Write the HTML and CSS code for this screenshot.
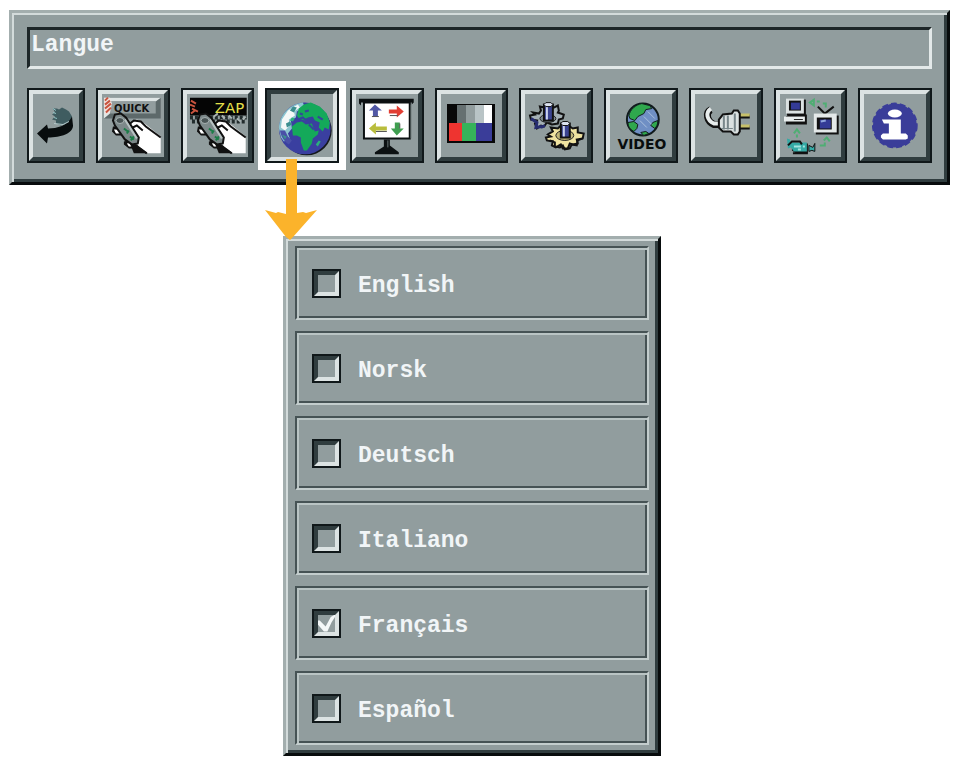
FILE: index.html
```
<!DOCTYPE html>
<html lang="fr">
<head>
  <meta charset="UTF-8">
  <meta name="viewport" content="width=device-width, initial-scale=1.0">
  <title>Langue</title>
  <link rel="stylesheet" href="styles.css">
</head>
<body>
  <!-- shared drawing: hand holding the remote -->
  <svg class="defs" width="0" height="0" aria-hidden="true">
    <symbol id="hand" viewBox="6 6 62 62">
      <path d="M17 38h7l4 9h-8l-4-4zM28 53l8-2 5 9h-8l-5-4z" fill="#111"/>
      <path d="M18 41h4l2 4h-4zM31 55l5-1 2 4h-5z" fill="#fff"/>
      <path d="M32 50l20 15h-14z" fill="#111"/>
      <path d="M34 42l2-8 5-3 8 4 16 13v17H52l-9-7-5-9z" fill="#fff"/>
      <path d="M33 36l5-4 7 1 5 5 15 11M35 40l6-3 6 5M51 65l-11-8" fill="none" stroke="#111" stroke-width="2"/>
      <path d="M17 32l2-6 6-1 5 4 13 20-1 6-6 1-7-5-10-14z" fill="#7d898a" stroke="#111" stroke-width="2"/>
      <path d="M29 31l12 19" stroke="#b9c3c3" stroke-width="2"/>
      <ellipse cx="24" cy="32" rx="4" ry="3" fill="#4a5556" stroke="#a9b3b3"/>
      <path d="M28 40l4 3M31 45l2-3M34 48l4 3M35 52l3-4" stroke="#1c7d48" stroke-width="2"/>
    </symbol>
  </svg>

  <header class="panel toolbar">
    <div class="title">Langue</div>
    <nav class="tools">
      <button class="tool" type="button" aria-label="Retour">
        <svg viewBox="6 6 46 62">
          <path d="M26 20h4l2 1 3-2 4 2 3 2 3 5-1 5-10 4-5-2v-3l-4-1 3-3-3-2 3-2z" fill="#3f5c60"/>
          <path d="M26 20l3 2M26 24l3 1M27 29l3 1" stroke="#8fc2c4" stroke-width="1"/>
          <path d="M10 45l10-9 1 4c9 0 20-3 24-12l1 9c0 8-12 12-25 12l-1 6z" fill="#080d0e"/>
          <path d="M27 35l9 1 6-3" stroke="#b3c9ca" stroke-width="1" fill="none"/>
        </svg>
      </button>
      <button class="tool" type="button" aria-label="Quick">
        <svg viewBox="6 6 62 62">
          <path d="M8 9h57v21H8z" fill="#5d696a"/>
          <path d="M8 9h57l-5 4H14v12l-6 5z" fill="#dfe5e5"/>
          <path d="M14 13h46v12H14z" fill="#929d9e"/>
          <path d="M8 9h6l2 6-2 9-5 2z" fill="#efe3df"/>
          <path d="M9 12l3-3M9 16l5-4M9 20l6-5M10 24l5-5" stroke="#c9543f" stroke-width="2"/>
          <text class="quick" x="18" y="23">QUICK</text>
          <use href="#hand" x="6" y="6" width="62" height="62"/>
        </svg>
      </button>
      <button class="tool" type="button" aria-label="Zap">
        <svg viewBox="6 6 62 62">
          <path d="M9 9h57v18H9z" fill="#050505"/>
          <path d="M9 29h57M11 33h55" stroke="#222c2d" stroke-width="4" stroke-dasharray="3 2"/>
          <path d="M10 12l5 3M9 16l5 2M11 20l6 3M10 25l4-3" stroke="#c9543f" stroke-width="2"/>
          <path d="M33 28l4-3M41 27l3 3M48 27l3 3M56 30l4 3M62 31l3-3" stroke="#a9b3b3" stroke-width="2"/>
          <text class="zap" x="34" y="24">ZAP</text>
          <use href="#hand" x="6" y="6" width="62" height="62"/>
        </svg>
      </button>
      <div class="current">
        <button class="tool pressed" type="button" aria-label="Langue" aria-pressed="true">
          <svg viewBox="6 6 62 62">
            <circle cx="42" cy="42" r="25" fill="#15181c"/>
            <circle cx="40" cy="40" r="26" fill="#3a3fa0"/>
            <path d="M14 40c0-12 9-24 24-26l2 5-8 4-1 6-5 3 1 8-4 5 2 5-6 3-3-4z" fill="#8cc5cf"/>
            <path d="M17 31l6-9 10-6 2 3-6 4 1 4-6 4v7l-4 4-4-3z" fill="#f4f8f8"/>
            <path d="M15 42h5l3 6 4 4-3 4c-5-3-8-8-9-14z" fill="#4a50a8"/>
            <path d="M25 22l3-4 4 1-3 5zM21 35l4-2 2 3-5 3zM17 46l3 5 2-3z" fill="#3c8e8f"/>
            <path d="M32 27l2-7 5-4 7-2 9 4 7 7 3 9-1 7-4-2-2 4-4-4 1-5-5-2-2-4-5 1-3 3-6-2z" fill="#14a95a"/>
            <path d="M27 38l5-4 5-1 4 3 6-1 3 8 4-1-1 4-5 4-1 5-5 7h-3l-3-8v-5l-4-2h-4z" fill="#14a95a"/>
            <path d="M33 31l5-2 2 2 6-1 4 3M44 36l5 5M40 23l4-1M35 25l3 1M53 28l5 3" fill="none" stroke="#34469c" stroke-width="2"/>
            <path d="M51 56l3-4 2 1-3 5zM27 29l3 1-2 3-3-1z" fill="#2bb07c"/>
          </svg>
        </button>
        <!-- arrow to the open menu -->
        <svg class="pointer" viewBox="0 0 52 81" aria-hidden="true">
          <path d="M21 0h11v54l6-1 3 1 11-3-24 27-3 3-4-3L0 51l11 3 2-1 8 2z" fill="#fbb32b"/>
        </svg>
      </div>
      <button class="tool" type="button" aria-label="Image">
        <svg viewBox="6 6 62 62">
          <path d="M9 10h55v4l-2 2v-2h-51v3l-2-2z" fill="#0c1112"/>
          <path d="M14 14h46v36H14z" fill="#fff" stroke="#0c1112" stroke-width="2"/>
          <path d="M61 16v34" stroke="#4f5a5b" stroke-width="1"/>
          <path d="M25 16l7 6h-4v6h-5v-6h-4z" fill="#5158a5"/>
          <path d="M39 21h8v-4l7 6-7 6v-4h-8z" fill="#e23e33"/>
          <path d="M19 40l7-6v4h11v4H26v4z" fill="#b9bd3c"/>
          <path d="M45 34h5v6h4l-7 7-6-7h4z" fill="#3f9e50"/>
          <path d="M22 28h7M40 27h8M26 43h11M50 35v5" stroke="#555" stroke-width="1"/>
          <path d="M34 51h6v6l9 7v2H25v-2l9-6z" fill="#0c1112"/>
          <path d="M38 52v7" stroke="#667273" stroke-width="1"/>
        </svg>
      </button>
      <button class="tool" type="button" aria-label="Couleurs">
        <svg viewBox="6 6 62 62" shape-rendering="crispEdges">
          <path d="M12 15h48v40H12z" fill="#080808"/>
          <path d="M22 16h9v18h-9z" fill="#667071"/>
          <path d="M31 16h9v18h-9z" fill="#929d9e"/>
          <path d="M40 16h9v18h-9z" fill="#b9c4c6"/>
          <path d="M49 16h8v18h-8z" fill="#fff"/>
          <path d="M14 34h13v19H14z" fill="#ee3430"/>
          <path d="M27 34h14v19H27z" fill="#36b35a"/>
          <path d="M41 34h16v19H41z" fill="#3a3d99"/>
        </svg>
      </button>
      <button class="tool" type="button" aria-label="Réglages">
        <svg viewBox="6 6 62 62">
          <path d="M14 24l6 1 2-3-1-4 5 1 2-2h5l2 2 4-2 1 5-1 2 6 2-1 4-4 1-1 4-6 1-5-2-3 4-3-1-4 3-2-5 2-3-6-1-1-4 5-1z" fill="#a4b0b5" stroke="#111" stroke-width="2"/>
          <path d="M12 30l6 4-1 5 6-1M22 39l4-2" fill="none" stroke="#272d70" stroke-width="3"/>
          <ellipse cx="29" cy="30" rx="8" ry="4" fill="#7e8a8f" stroke="#222"/>
          <path d="M25 16h9v16h-9z" fill="#3a4390" stroke="#111" stroke-width="2"/>
          <path d="M28 17v14" stroke="#cbd4ee" stroke-width="2"/>
          <path d="M25 16l2-2h5l2 2-2 2h-5z" fill="#dbe2ef" stroke="#111"/>
          <path d="M29 46l5-3-2-4 7 1 2-2h10l3 2 5-1v5l6 1-1 5-6 1 1 4-5 1-3-1-2 5h-5l-2-4-5 3-4-2 1-4-6-1-1-3 5-1z" fill="#efe3a0" stroke="#111" stroke-width="2"/>
          <path d="M31 52l5 2v4l5 1 3-2 2 4 5-1 2-4 5 1 1-5 5-2" fill="none" stroke="#111" stroke-width="2"/>
          <ellipse cx="46" cy="47" rx="9" ry="5" fill="#c1b87a" stroke="#222"/>
          <path d="M42 35h9v14h-9z" fill="#3a4390" stroke="#111" stroke-width="2"/>
          <path d="M45 36v12" stroke="#cbd4ee" stroke-width="2"/>
          <path d="M42 35l2-2h5l2 2-2 2h-5z" fill="#dbe2ef" stroke="#111"/>
        </svg>
      </button>
      <button class="tool" type="button" aria-label="Vidéo">
        <svg viewBox="6 6 62 62">
          <circle cx="39" cy="31" r="16" fill="#6f8fc4" stroke="#111b1d" stroke-width="2"/>
          <path d="M25 27c1-6 7-11 13-12l8 2 2 3-6 1-2 4-6 3-3 4-5-2z" fill="#2fa84d" stroke="#111b1d"/>
          <path d="M24 34l6-1 4 3-1 4-3 3c-4-2-6-5-6-9zM49 34l5-2c0 4-1 6-3 8l-4-3zM37 44l5-1 3 2-5 2z" fill="#2fa84d" stroke="#111b1d"/>
          <path d="M44 23l7 7M40 28l8 8M36 32l7 7" stroke="#a9c0dd" stroke-width="1"/>
          <text class="video" x="38" y="61" text-anchor="middle">VIDEO</text>
        </svg>
      </button>
      <button class="tool" type="button" aria-label="Alimentation">
        <svg viewBox="6 6 62 62">
          <path d="M22 21c-6 3-4 12 3 15h6" fill="none" stroke="#111" stroke-width="7"/>
          <path d="M22 20c-6 4-4 12 3 15h6" fill="none" stroke="#e8eded" stroke-width="4"/>
          <path d="M50 26h11v4H50zM50 37h11v4H50z" fill="#111"/>
          <path d="M51 25h10v3H51zM51 36h10v3H51z" fill="#c7c06a"/>
          <path d="M30 31l4-5 9-1 2-3h4l2 3v18l-2 3h-4l-3-3h-8l-4-4z" fill="#dbe1e1" stroke="#111" stroke-width="2"/>
          <path d="M35 27v14M39 27v14M46 25v18" stroke="#78868a" stroke-width="2"/>
          <path d="M32 40h12" stroke="#78868a" stroke-width="1"/>
        </svg>
      </button>
      <button class="tool" type="button" aria-label="Sources">
        <svg viewBox="6 6 62 62">
          <path d="M13 11h19v16H13z" fill="#111"/>
          <path d="M12 10h18v15H12z" fill="#dce2e2"/>
          <path d="M15 12h12v10H15z" fill="#111"/>
          <path d="M17 14h9v7h-9z" fill="#343b96"/>
          <path d="M12 28l3-2h18v10H12z" fill="#111"/>
          <path d="M10 28h21v5H10z" fill="#e8eded"/>
          <path d="M20 31h9" stroke="#222" stroke-width="1"/>
          <path d="M44 18l7 7 9-7" fill="none" stroke="#111" stroke-width="2"/>
          <path d="M42 27h23v19H42z" fill="#111"/>
          <path d="M40 25h23v19H40z" fill="#e4e9e9"/>
          <path d="M43 29h15v12H43z" fill="#111"/>
          <path d="M46 31h11v9H46z" fill="#343b96"/>
          <path d="M47 33l5-1" stroke="#8fa5dd" stroke-width="2"/>
          <path d="M18 55h16v10H22l-4-3z" fill="#111"/>
          <path d="M13 50l3 1 1 3h16v9H20l-3-4-3 1z" fill="#35aaa5"/>
          <path d="M35 57l4 2 2-4v8l-3-1-3 1z" fill="#35aaa5" stroke="#111"/>
          <path d="M14 57l4-4h8l2 3M19 65h15" fill="none" stroke="#111" stroke-width="2"/>
          <path d="M20 58h7M24 61h3M29 58h2" stroke="#a3e4df" stroke-width="2"/>
          <path d="M36 14l4-3v6zM43 13h3M49 15h3v4M20 45l3-4 3 4M23 46v3M46 57h5v-3M50 52l3-3 3 4" fill="none" stroke="#4fae73" stroke-width="2"/>
        </svg>
      </button>
      <button class="tool" type="button" aria-label="Informations">
        <svg viewBox="6 6 62 62">
          <circle cx="37" cy="37" r="22" fill="#3a3d99"/>
          <circle cx="37" cy="37" r="22" fill="none" stroke="#3a3d99" stroke-width="2" stroke-dasharray="6 3"/>
          <ellipse cx="37" cy="25" rx="7" ry="4" fill="#fff"/>
          <path d="M24 31h19v14h5l2 2v3l-2 1H25l-2-2v-2l2-2h6V35h-5z" fill="#fff"/>
        </svg>
      </button>
    </nav>
  </header>

  <!-- language choices -->
  <main class="panel menu">
    <label class="choice"><input class="tick" type="checkbox"><span>English</span></label>
    <label class="choice"><input class="tick" type="checkbox"><span>Norsk</span></label>
    <label class="choice"><input class="tick" type="checkbox"><span>Deutsch</span></label>
    <label class="choice"><input class="tick" type="checkbox"><span>Italiano</span></label>
    <label class="choice"><input class="tick" type="checkbox" checked><span>Français</span></label>
    <label class="choice"><input class="tick" type="checkbox"><span>Español</span></label>
  </main>
</body>
</html>
```
FILE: styles.css
```
* {
  box-sizing: border-box;
}
body {
  margin: 0;
  padding: 10px 7px 6px 9px;
  background-color: #fff;
  color: #f1f5f7;
  font-family: "Liberation Mono", "Courier New", monospace;
  font-size: 23px;
  font-weight: bold;
  line-height: 28px;
}
.defs {
  position: absolute;
}
/* raised grey panels */
.panel {
  background-color: #919d9e;
  border: 3px solid;
  border-color: #a3aeae #080c0d #080c0d #a3aeae;
  box-shadow: inset 2px 2px 0 #d3dbdb, inset -3px -3px 0 #303d3f;
}
.toolbar {
  padding: 14px 15px 19px;
}
.title {
  height: 42px;
  padding: 1px;
  border: 3px solid;
  border-color: #1d2628 #e3e9e9 #e3e9e9 #1d2628;
}
.tools {
  display: grid;
  grid-template-columns: 58px repeat(10, minmax(0, 1fr));
  gap: 11px;
  margin-top: 19px;
}
.tool {
  display: block;
  width: 100%;
  height: 75px;
  padding: 0;
  background-color: #919d9e;
  border: 6px solid;
  border-color: #dce3e3 #303d3f #303d3f #dce3e3;
  outline: 2px solid #10181a;
  outline-offset: -2px;
}
.tool svg {
  display: block;
  width: 100%;
  height: 100%;
}
.current {
  position: relative;
}
.pressed {
  border-color: #303d3f #dce3e3 #dce3e3 #303d3f;
  box-shadow: 0 0 0 7px #fff;
}
.pointer {
  position: absolute;
  top: 71px;
  left: 0;
  z-index: 1;
  width: 52px;
  height: 81px;
}
.quick {
  font: bold 10px "DejaVu Sans", sans-serif;
  fill: #111;
}
.zap {
  font: 15px "DejaVu Sans", sans-serif;
  fill: #e6e04a;
}
.video {
  font: bold 14px "DejaVu Sans", sans-serif;
  fill: #080c0d;
}
.menu {
  display: flex;
  flex-direction: column;
  gap: 11px;
  width: 378px;
  margin: 51px 0 0 274px;
  padding: 7px 9px 8px;
}
.choice {
  display: flex;
  align-items: center;
  gap: 17px;
  height: 74px;
  padding-left: 15px;
  border: 2px solid;
  border-color: #465355 #c3cdcd #c3cdcd #465355;
  box-shadow: inset 2px 2px 0 #b9c4c4, inset -2px -2px 0 #465355;
}
.choice span {
  padding-top: 5px;
}
.tick {
  appearance: none;
  width: 29px;
  height: 29px;
  margin: 0;
  background-color: #919d9e;
  border: 6px solid;
  border-color: #303d3f #dce3e3 #dce3e3 #303d3f;
  outline: 2px solid #10181a;
  outline-offset: -2px;
}
.tick:checked::before {
  content: "";
  display: block;
  height: 17px;
  background-color: #f4f8f8;
  clip-path: polygon(0 35%, 10% 35%, 45% 70%, 75% 15%, 100% 0, 100% 15%, 80% 45%, 55% 100%, 35% 100%, 0 60%);
}
```
